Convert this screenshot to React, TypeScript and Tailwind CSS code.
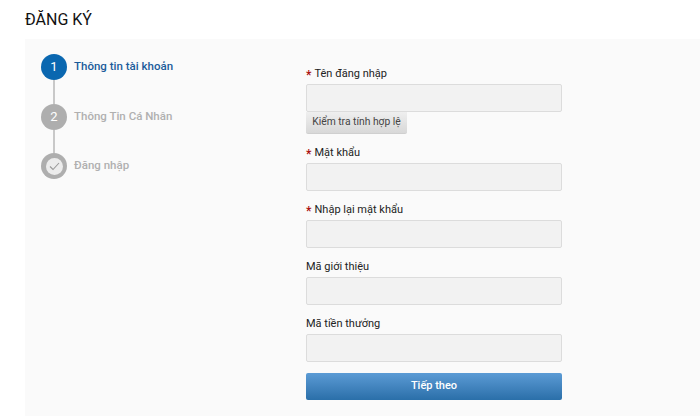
const steps = [
  { label: "Thông tin tài khoản", active: true, n: "1" },
  { label: "Thông Tin Cá Nhân", active: false, n: "2" },
  { label: "Đăng nhập", active: false, n: "" },
];

function Field({ label, required }: { label: string; required?: boolean }) {
  return (
    <div>
      <div className="h-[21px] pt-[2px] text-[11px] text-[#222] flex items-center">
        {required && <span className="w-[8.5px] text-[#a11] font-bold text-[12px] leading-[12px]">*</span>}
        {label}
      </div>
      <div className="h-[28px] bg-[#f2f2f2] border border-[#dcdcdc] rounded-[2px]" />
    </div>
  );
}

export default function App() {
  return (
    <div className="w-[700px] h-[419px] bg-white overflow-hidden font-['Roboto',sans-serif]">
      <h1 className="pl-[25px] pt-[10px] h-[39px] text-[16px] leading-[20px] text-[#111]">ĐĂNG KÝ</h1>
      <div className="ml-[25px] h-[377px] bg-[#fafafa] flex">
        <div className="w-[281px] pl-[16px] pt-[15px] shrink-0">
          {steps.map((s, i) => (
            <div key={s.label} className="flex">
              <div className="flex flex-col items-center w-[26px]">
                <div
                  className={`w-[26px] h-[26px] rounded-full flex items-center justify-center text-white text-[13px] ${
                    s.active ? "bg-[#0a67b0]" : "bg-[#aeaeae]"
                  }`}
                >
                  {s.n || (
                    <span className="w-[17px] h-[17px] rounded-full bg-[#ececec] flex items-center justify-center">
                      <svg width="11" height="9" viewBox="0 0 11 9" fill="none" stroke="#999" strokeWidth="1.1">
                        <path d="M1 4.5L4 7.5L10 1" />
                      </svg>
                    </span>
                  )}
                </div>
                {i < 2 && <div className="w-[2px] h-[23.5px] bg-[#c8c8c8]" />}
              </div>
              <div
                className={`ml-[7px] h-[26px] text-[11.5px] font-medium leading-[25px] ${
                  s.active ? "text-[#1a5c9a]" : "text-[#b0b0b0]"
                }`}
              >
                {s.label}
              </div>
            </div>
          ))}
        </div>
        <div className="w-[256px] pt-[24px] flex flex-col">
          <Field label="Tên đăng nhập" required />
          <div className="w-[101px] h-[22px] bg-gradient-to-b from-[#efefef] to-[#d8d8d8] rounded-b-[2px] border-b border-[#cfcfcf] text-[10.3px] leading-[20px] text-center text-[#444]">
            Kiểm tra tính hợp lệ
          </div>
          <div className="flex flex-col gap-[8px] mt-[8px]">
            <Field label="Mật khẩu" required />
            <Field label="Nhập lại mật khẩu" required />
            <Field label="Mã giới thiệu" />
            <Field label="Mã tiền thưởng" />
          </div>
          <button className="mt-[11px] h-[27px] rounded-[2px] bg-gradient-to-b from-[#5b9bd5] to-[#2a6fa9] text-white text-[11px] font-medium">
            Tiếp theo
          </button>
        </div>
      </div>
    </div>
  );
}
